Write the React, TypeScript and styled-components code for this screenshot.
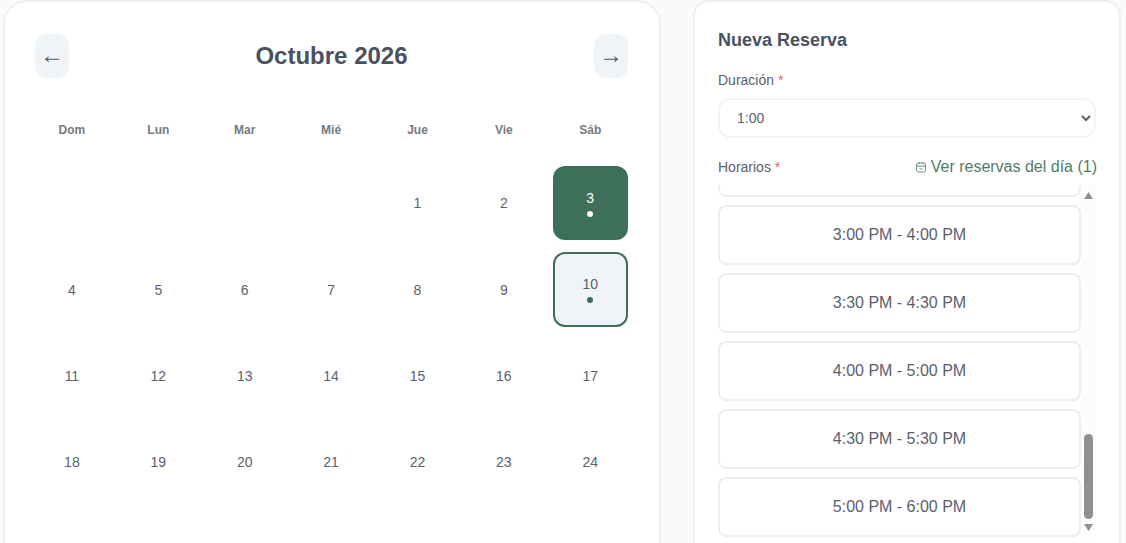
import React, { useLayoutEffect, useRef } from "react";
import styled, { createGlobalStyle } from "styled-components";

const Global = createGlobalStyle`
  html, body { margin: 0; padding: 0; height: 543px; overflow: hidden; background: #f8fafc; }
  * { box-sizing: border-box; }
  body { font-family: "Liberation Sans", Arial, sans-serif; }
`;

const Page = styled.main`
  display: grid;
  grid-template-columns: 658px 428px;
  column-gap: 32px;
  align-items: start;
  padding: 0 0 0 3px;
  height: 543px;
  overflow: hidden;
`;

const CalendarCard = styled.section`
  height: 640px;
  background: #fff;
  border: 2px solid #eeeff1;
  border-radius: 24px;
  padding: 32px 31px 0 30px;
`;

const CalendarHeader = styled.header`
  display: flex;
  align-items: center;
  justify-content: space-between;
  margin-bottom: 45px;
`;

const NavButton = styled.button`
  width: 34px;
  height: 44px;
  padding: 0 0 2px;
  border: none;
  border-radius: 12px;
  background: #f0f4f9;
  color: #555c68;
  font: 24px "Liberation Sans", Arial, sans-serif;
  display: flex;
  align-items: center;
  justify-content: center;
`;

const MonthTitle = styled.h2`
  margin: 0;
  color: #4a5160;
  font-size: 24px;
  font-weight: 700;
`;

const Grid = styled.div`
  display: grid;
  grid-template-columns: repeat(7, 75px);
  column-gap: 11.4px;
  row-gap: 12px;
  margin-left: -0.6px;
`;

const Weekday = styled.div`
  height: 14px;
  margin-bottom: 17px;
  text-align: center;
  color: #757a82;
  font-size: 12px;
  font-weight: 700;
  line-height: 14px;
`;

const Day = styled.div<{ $state?: "selected" | "today" }>`
  height: 74.4px;
  border-radius: 12px;
  display: flex;
  flex-direction: column;
  align-items: center;
  justify-content: center;
  gap: 5px;
  font-size: 14px;
  color: ${(p) => (p.$state === "selected" ? "#fff" : "#5b616c")};
  background: ${(p) =>
    p.$state === "selected" ? "#3d6f5a" : p.$state === "today" ? "#f0f4f9" : "transparent"};
  border: ${(p) => (p.$state === "today" ? "2px solid #3d6f5a" : "none")};
`;

const Dot = styled.span<{ $light?: boolean }>`
  width: 6px;
  height: 6px;
  border-radius: 50%;
  background: ${(p) => (p.$light ? "#fff" : "#3d6f5a")};
`;

const BookingCard = styled.section`
  height: 640px;
  background: #fff;
  border: 2px solid #eeeff1;
  border-radius: 16px;
  padding: 28px 22px 0 23px;
`;

const BookingTitle = styled.h3`
  margin: 0 0 22px;
  color: #4a5160;
  font-size: 18px;
  line-height: 20px;
  font-weight: 700;
`;

const Label = styled.label`
  display: block;
  color: #5b616c;
  font-size: 14px;
  line-height: 16px;
`;

const Required = styled.span`
  color: #d9676c;
`;

const Select = styled.select`
  display: block;
  width: 378px;
  height: 40px;
  margin: 10px 0 20px;
  padding: 0 13px;
  background: #fff;
  border: 2px solid #f2f4f6;
  border-radius: 12px;
  color: #5b616c;
  font: 14px "Liberation Sans", Arial, sans-serif;
  outline: none;
`;

const SlotsHeader = styled.div`
  display: flex;
  align-items: center;
  justify-content: space-between;
  width: 379px;
  height: 18px;
`;

const DayLink = styled.a`
  display: inline-flex;
  align-items: center;
  gap: 4px;
  color: #4f7c69;
  font-size: 16px;
  line-height: 18px;
`;

const SlotsArea = styled.div`
  display: flex;
  width: 380px;
  height: 352px;
  margin-top: 9px;
`;

const SlotList = styled.div`
  width: 363px;
  height: 352px;
  overflow-y: auto;
  scrollbar-width: none;
  display: flex;
  flex-direction: column;
  gap: 8px;
`;

const Rail = styled.div`
  flex: none;
  width: 15px;
  height: 352px;
  background: #fcfcfc;
  display: flex;
  flex-direction: column;
`;

const RailArrow = styled.div<{ $dir: "up" | "down" }>`
  flex: none;
  height: ${(p) => (p.$dir === "up" ? "20px" : "18px")};
  padding-bottom: ${(p) => (p.$dir === "up" ? "0" : "2px")};
  display: flex;
  align-items: center;
  justify-content: center;
`;

const RailTrack = styled.div`
  flex: 1;
  display: flex;
  flex-direction: column;
  justify-content: flex-end;
  align-items: center;
`;

const RailThumb = styled.div`
  width: 9px;
  height: 85px;
  border-radius: 5px;
  background: #8f8f8f;
`;

const Slot = styled.button`
  flex: none;
  width: 363px;
  height: 60px;
  background: #fff;
  border: 2px solid #eceef0;
  border-radius: 8px;
  color: #5b616c;
  font: 16px "Liberation Sans", Arial, sans-serif;
`;

const weekdays = ["Dom", "Lun", "Mar", "Mié", "Jue", "Vie", "Sáb"];
const days: (number | null)[] = [
  null, null, null, null, 1, 2, 3,
  4, 5, 6, 7, 8, 9, 10,
  11, 12, 13, 14, 15, 16, 17,
  18, 19, 20, 21, 22, 23, 24,
];

const fmt = (mins: number) => {
  const h24 = Math.floor(mins / 60);
  const m = mins % 60;
  const h = h24 > 12 ? h24 - 12 : h24;
  return `${h}:${m === 0 ? "00" : "30"} ${h24 >= 12 ? "PM" : "AM"}`;
};
const slots = Array.from({ length: 19 }, (_, i) => 480 + i * 30).map(
  (s) => `${fmt(s)} - ${fmt(s + 60)}`
);

const CalendarIcon = () => (
  <svg width="12" height="12" viewBox="0 0 12 12" fill="none" stroke="#6b927f" strokeWidth="1">
    <rect x="1.5" y="2" width="9" height="9" rx="2" />
    <path d="M1.5 5h9M4 1v2M8 1v2M4.5 7.5c.6.8 2.4.8 3 0" />
  </svg>
);

const ArrowUp = () => (
  <svg width="9" height="7" viewBox="0 0 9 7">
    <path d="M4.5 0L9 7H0z" fill="#909090" />
  </svg>
);

const ArrowDown = () => (
  <svg width="9" height="7" viewBox="0 0 9 7">
    <path d="M0 0H9L4.5 7z" fill="#909090" />
  </svg>
);

export default function App() {
  const listRef = useRef<HTMLDivElement>(null);
  useLayoutEffect(() => {
    if (listRef.current) listRef.current.scrollTop = listRef.current.scrollHeight;
  }, []);

  return (
    <>
      <Global />
      <Page>
        <CalendarCard>
          <CalendarHeader>
            <NavButton>←</NavButton>
            <MonthTitle>Octubre 2026</MonthTitle>
            <NavButton>→</NavButton>
          </CalendarHeader>
          <Grid>
            {weekdays.map((d) => (
              <Weekday key={d}>{d}</Weekday>
            ))}
            {days.map((d, i) => (
              <Day key={i} $state={d === 3 ? "selected" : d === 10 ? "today" : undefined}>
                {d}
                {d === 3 && <Dot $light />}
                {d === 10 && <Dot />}
              </Day>
            ))}
          </Grid>
        </CalendarCard>
        <BookingCard>
          <BookingTitle>Nueva Reserva</BookingTitle>
          <Label>
            Duración <Required>*</Required>
          </Label>
          <Select defaultValue="1:00">
            <option>1:00</option>
          </Select>
          <SlotsHeader>
            <Label>
              Horarios <Required>*</Required>
            </Label>
            <DayLink>
              <CalendarIcon />
              Ver reservas del día (1)
            </DayLink>
          </SlotsHeader>
          <SlotsArea>
            <SlotList ref={listRef}>
              {slots.map((s) => (
                <Slot key={s}>{s}</Slot>
              ))}
            </SlotList>
            <Rail>
              <RailArrow $dir="up">
                <ArrowUp />
              </RailArrow>
              <RailTrack>
                <RailThumb />
              </RailTrack>
              <RailArrow $dir="down">
                <ArrowDown />
              </RailArrow>
            </Rail>
          </SlotsArea>
        </BookingCard>
      </Page>
    </>
  );
}
